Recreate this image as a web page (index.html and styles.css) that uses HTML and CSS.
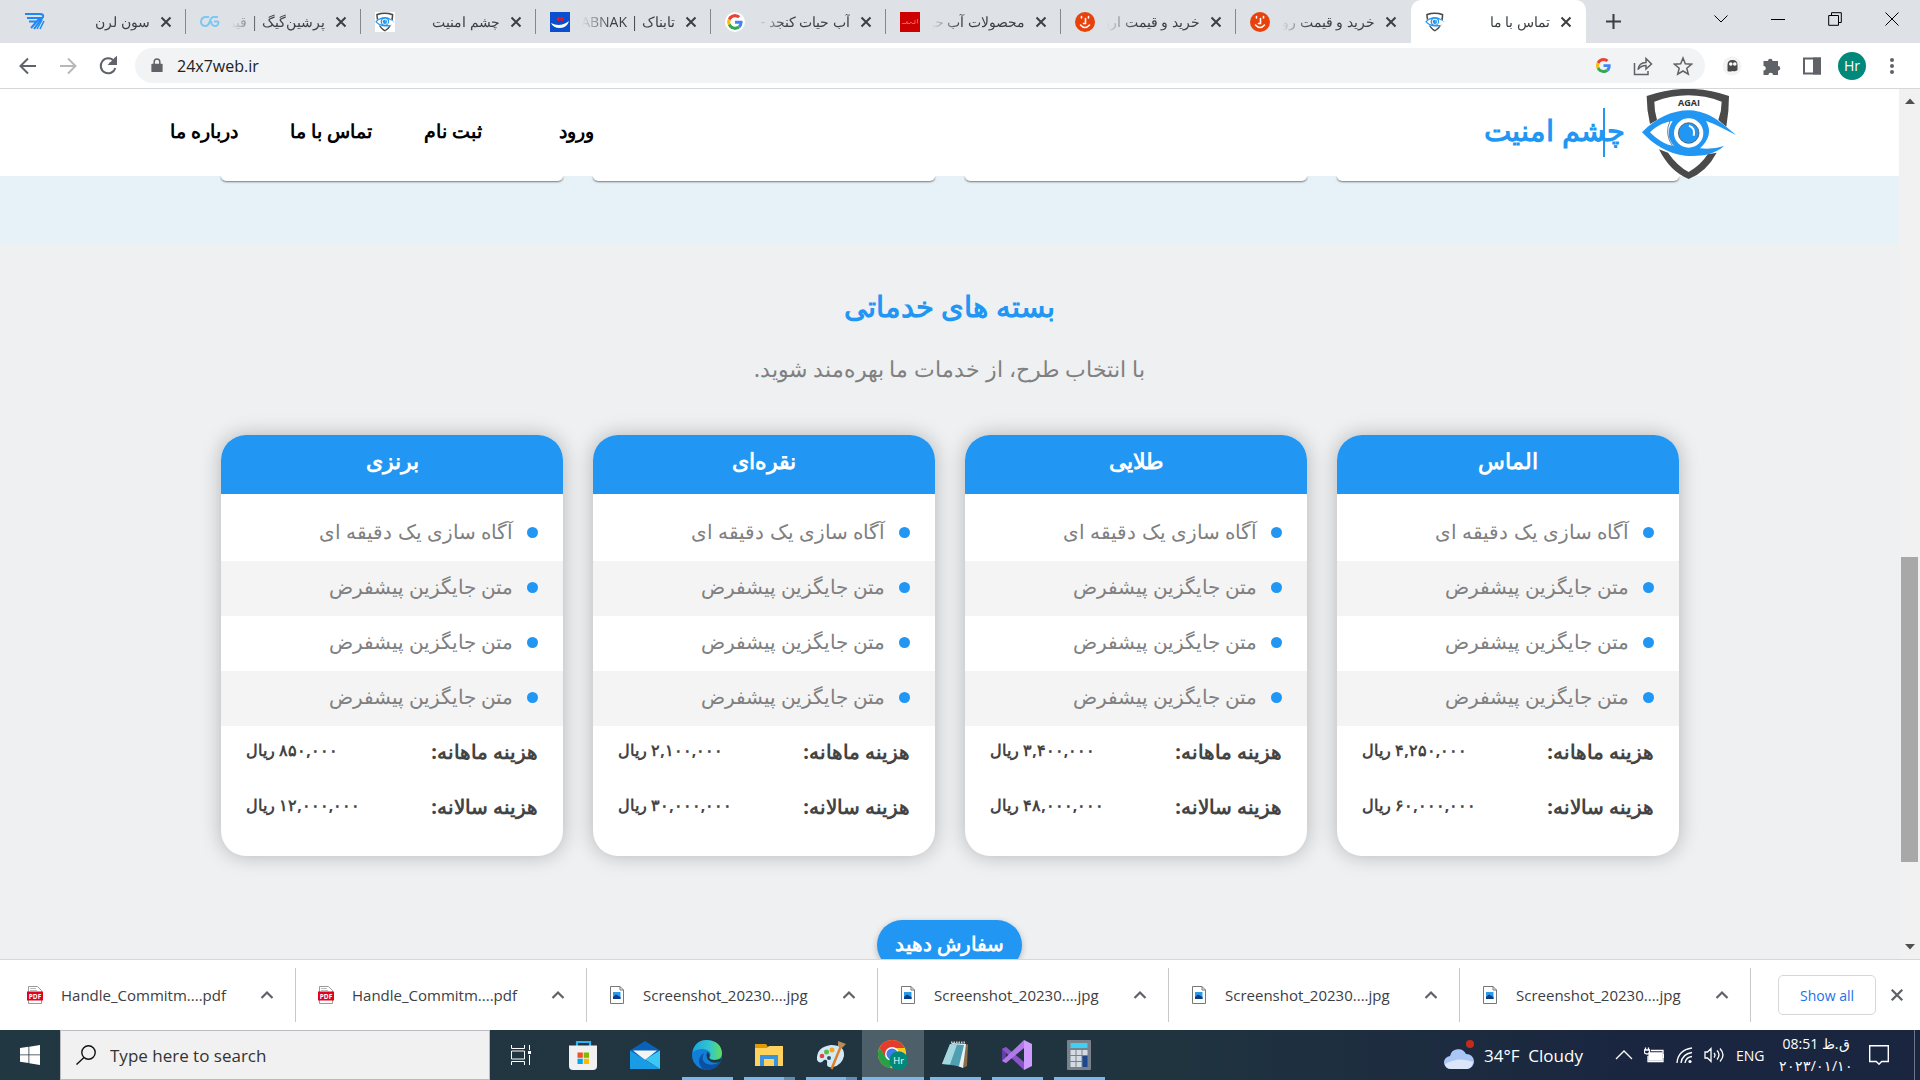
FILE: index.html
```html
<!DOCTYPE html>
<html lang="fa">
<head>
<meta charset="utf-8">
<title>تماس با ما</title>
<link rel="stylesheet" href="styles.css">
</head>
<body>
<svg class="defs" aria-hidden="true">
  <symbol id="x" viewBox="0 0 12 12"><path d="M1.500 1.500l9 9M10.500 1.500l-9 9" stroke="currentColor" stroke-width="2" fill="none"/></symbol>
  <symbol id="up" viewBox="0 0 14 10"><path d="M1.500 8L7 2.500 12.500 8" stroke="currentColor" stroke-width="2.200" fill="none"/></symbol>
  <symbol id="google" viewBox="0 0 48 48"><path fill="#ea4335" d="M24 9.500c3.540 0 6.710 1.220 9.210 3.600l6.850-6.850C35.900 2.380 30.470 0 24 0 14.620 0 6.510 5.380 2.560 13.220l7.980 6.190C12.430 13.720 17.740 9.500 24 9.500z"/><path fill="#4285f4" d="M46.980 24.550c0-1.570-.15-3.090-.38-4.550H24v9.020h12.940c-.58 2.960-2.260 5.480-4.780 7.180l7.730 6c4.510-4.180 7.090-10.360 7.090-17.650z"/><path fill="#fbbc05" d="M10.530 28.590A14.500 14.500 0 0 1 9.770 24c0-1.600.27-3.140.76-4.590l-7.980-6.190A23.900 23.900 0 0 0 0 24c0 3.880.92 7.540 2.560 10.780l7.970-6.190z"/><path fill="#34a853" d="M24 48c6.480 0 11.930-2.130 15.890-5.810l-7.730-6c-2.150 1.450-4.920 2.300-8.160 2.300-6.260 0-11.570-4.220-13.470-9.910l-7.980 6.190C6.510 42.620 14.620 48 24 48z"/></symbol>
  <symbol id="shield" viewBox="513 12 288 270">
    <path fill="#4a4a4a" d="M530 33Q655-10 777 33Q777 80 769 125L745 105Q755 78 755 50Q655 12 553 50Q553 78 561 105L540 117Q530 75 530 33zM567 193L594 203Q622 243 656 261Q692 241 713 208L740 203Q710 260 656 282Q600 260 567 193z"/>
    <path fill="#2196f3" d="M516 142C560 97 610 75 660 76C720 80 752 112 798 150C765 134 738 118 708 108Q733 150 690 190Q730 194 762 183C730 212 685 215 645 212C590 205 550 178 516 142z"/>
    <path fill="#fff" d="M540 142C560 122 580 112 608 108Q582 146 612 184C582 178 560 162 540 142z"/>
    <circle cx="656" cy="144" r="44" fill="#fff"/><circle cx="656" cy="144" r="31" fill="#2196f3" stroke="#444" stroke-width="2"/>
    <path d="M657 122q20 8 14 30" stroke="#fff" stroke-width="6" fill="none"/>
    <path d="M600 108q-18 38 8 76" stroke="#345" stroke-width="2" fill="none"/>
  </symbol>
  <symbol id="smile" viewBox="0 0 20 20"><circle cx="10" cy="10" r="10" fill="#e8420c"/><path d="M6.500 4.500v1.500M13.500 4.500v1.500M10.500 6.500v5H8.500M5.500 13q4.500 5 9 0" stroke="#fff" stroke-width="1.600" fill="none" stroke-linecap="round"/></symbol>
  <symbol id="pdf" viewBox="0 0 16 18"><path d="M1.500.5h9l4 4v13h-13z" fill="#fff" stroke="#999"/><path d="M3 2.500h6M3 4.500h7" stroke="#bbb"/><path fill="#e2001a" d="M0 5.500h16v9H0z"/><text x="8" y="12.500" font-size="6.500" font-weight="700" fill="#fff" text-anchor="middle" font-family="Open Sans">PDF</text></symbol>
  <symbol id="jpg" viewBox="0 0 14 18"><path d="M.5.5H10l3.500 3.500v13.500H.5z" fill="#fff" stroke="#777"/><path d="M10 .5V4h3.500" fill="none" stroke="#777"/><path fill="#2b9be8" d="M3 6h7.500v7H3z"/><path fill="#0b3f8c" d="M3 11l3-2.500 4.500 2.500v2H3z"/></symbol>
</svg>

<nav class="tabs">
  <div class="tab"><svg class="fav" viewBox="0 0 20 20"><path d="M0 2h15q4 0 3 3L9 17M2 6h13L6 16M4 9.500h8" stroke="#1e88f5" stroke-width="2" fill="none"/><path d="M12 17l5-9M15 17l4-8" stroke="#1e88f5" stroke-width="1.500"/></svg><a href="#" dir="rtl">سون لرن</a><button aria-label="Close"><svg><use href="#x"/></svg></button></div>
  <div class="tab"><svg class="fav" viewBox="0 0 20 20"><path d="M9 5H5q-4 1-4 5t5 4q3-1 4-5t4-4h4M18.500 9.500H14M18.500 9.500q0 5-4 4.500-4-1-3-5" stroke="#7cc8f2" stroke-width="2" fill="none"/></svg><a href="#" dir="rtl">پرشین‌گیگ | قیمت</a><button aria-label="Close"><svg><use href="#x"/></svg></button></div>
  <div class="tab"><svg class="fav white"><use href="#shield"/></svg><a href="#" dir="rtl">چشم امنیت</a><button aria-label="Close"><svg><use href="#x"/></svg></button></div>
  <div class="tab"><svg class="fav" viewBox="0 0 20 20"><path fill="#0a4fd0" d="M0 0h20v20H0z"/><path d="M1 11q9 5 18-2-2 7-9 7t-9-5z" fill="#fff"/><circle cx="8.500" cy="7" r="1.900" fill="#f01020"/><circle cx="12" cy="7" r="1.900" fill="#f01020"/></svg><a href="#" dir="rtl">تابناک | TABNAK</a><button aria-label="Close"><svg><use href="#x"/></svg></button></div>
  <div class="tab"><svg class="fav white round"><use href="#google"/></svg><a href="#" dir="rtl">آب حیات کنجد - Google</a><button aria-label="Close"><svg><use href="#x"/></svg></button></div>
  <div class="tab"><svg class="fav" viewBox="0 0 20 20"><path fill="#cc0000" d="M0 0h20v20H0z"/><path d="M2 11.500h4l1-2v2h3l1-1.500 1 1.500h3V8M17.500 7v4.500" stroke="#ef8a80" fill="none" stroke-width=".7"/></svg><a href="#" dir="rtl">محصولات آب حیات</a><button aria-label="Close"><svg><use href="#x"/></svg></button></div>
  <div class="tab"><svg class="fav"><use href="#smile"/></svg><a href="#" dir="rtl">خرید و قیمت ارزان</a><button aria-label="Close"><svg><use href="#x"/></svg></button></div>
  <div class="tab last"><svg class="fav"><use href="#smile"/></svg><a href="#" dir="rtl">خرید و قیمت روغن</a><button aria-label="Close"><svg><use href="#x"/></svg></button></div>
  <div class="tab active"><svg class="fav"><use href="#shield"/></svg><a href="#" dir="rtl">تماس با ما</a><button aria-label="Close"><svg><use href="#x"/></svg></button></div>
  <button class="plus" aria-label="New tab"><svg viewBox="0 0 16 16"><path d="M8 0v16M0 8h16" stroke="#3c4043" stroke-width="2.200"/></svg></button>
  <div class="wins">
    <button aria-label="Tab search"><svg viewBox="0 0 14 14"><path d="M.5 3.500L7 10l6.500-6.500"/></svg></button>
    <button aria-label="Minimize"><svg viewBox="0 0 14 14"><path d="M0 7.500h14"/></svg></button>
    <button aria-label="Restore"><svg viewBox="0 0 14 14"><path d="M.7 3.500h9.800v9.800H.7zM3.500 3.500V.7h9.800v9.800h-2.800"/></svg></button>
    <button aria-label="Close window"><svg viewBox="0 0 14 14"><path d="M.5.5l13 13M13.500.5l-13 13"/></svg></button>
  </div>
</nav>

<div class="toolbar">
  <button aria-label="Back"><svg class="ic" viewBox="0 0 20 20"><path d="M18 10H3M10 2.500L2.500 10l7.500 7.500"/></svg></button>
  <button aria-label="Forward" class="off"><svg class="ic" viewBox="0 0 20 20"><path d="M2 10h15M10 2.500l7.500 7.500-7.500 7.500"/></svg></button>
  <button aria-label="Reload"><svg class="ic" viewBox="0 0 20 20"><path d="M16 5a7.500 7.500 0 1 0 1.400 7M17.500 1.500v6h-6"/><path class="f" d="M18 2v6h-6z"/></svg></button>
  <div class="omni">
    <svg class="lock" viewBox="0 0 12 16"><path fill="#5f6368" d="M1 6h10q1 0 1 1v7q0 1-1 1H1q-1 0-1-1V7q0-1 1-1z"/><path d="M3 6.500V4a3 3 0 0 1 6 0v2.500" fill="none" stroke="#5f6368" stroke-width="1.600"/></svg>
    <input type="text" value="24x7web.ir" aria-label="Address">
    <button aria-label="Google"><svg class="g"><use href="#google"/></svg></button>
    <button aria-label="Share"><svg class="ic thin" viewBox="0 0 20 20"><path d="M1.500 7v11.500H15V15M5 13.500q1-7 8-7V2.500L18.500 8 13 13v-3.500q-5 0-8 4z"/></svg></button>
    <button aria-label="Bookmark"><svg class="ic thin" viewBox="0 0 20 20"><path d="M10 2l2.300 5.700 6.200.5-4.700 4 1.500 6L10 15l-5.300 3.200 1.500-6-4.700-4 6.200-.5z"/></svg></button>
  </div>
  <button aria-label="Ghostery"><svg class="ic" viewBox="0 0 20 20"><circle cx="10" cy="10" r="9.500" fill="#f1f3f4" stroke="none"/><path fill="#4a4a4a" stroke="none" d="M5.500 9q0-5 5-5t5 5v5q-2 2-5 1-3 1-5 0z"/><circle cx="8.800" cy="8" r="1.800" fill="#fff" stroke="none"/><circle cx="12.800" cy="8" r="1.800" fill="#fff" stroke="none"/></svg></button>
  <button aria-label="Extensions"><svg class="ic" viewBox="0 0 20 20"><path class="f" d="M1.500 5H6a2.300 2.300 0 1 1 4.600 0H16v5a2.300 2.300 0 1 1 0 4.600V19h-5a2.300 2.300 0 0 0-4.600 0H1.500v-4.500a2.300 2.300 0 0 0 0-4.600z" stroke="none"/></svg></button>
  <button aria-label="Side panel"><svg class="ic" viewBox="0 0 20 20"><path d="M2 2.500h16v15H2z"/><path class="f" d="M12 2.500h6v15h-6z"/></svg></button>
  <button aria-label="Profile" class="avatar">Hr</button>
  <button aria-label="Menu"><svg class="ic" viewBox="0 0 20 20"><g class="f" stroke="none"><circle cx="10" cy="4" r="2"/><circle cx="10" cy="10" r="2"/><circle cx="10" cy="16" r="2"/></g></svg></button>
</div>

<div class="view">
  <main class="page" dir="rtl">
    <header class="site">
      <a href="#" class="brand"><span class="mark"><svg><use href="#shield"/></svg><span class="agai">AGAI</span></span><strong>چشم امنیت</strong></a>
      <nav class="menu"><a href="#" class="login">ورود</a><a href="#">ثبت نام</a><a href="#">تماس با ما</a><a href="#">درباره ما</a></nav>
    </header>
    <section class="features"><div class="grid"><i></i><i></i><i></i><i></i></div></section>
    <section class="packs">
      <h2>بسته های خدماتی</h2>
      <p>با انتخاب طرح، از خدمات ما بهره‌مند شوید.</p>
      <div class="grid">
        <article class="card"><h3>الماس</h3><ul><li>آگاه سازی یک دقیقه ای</li><li>متن جایگزین پیشفرض</li><li>متن جایگزین پیشفرض</li><li>متن جایگزین پیشفرض</li></ul><dl><div><dt>هزینه ماهانه:</dt><dd>۴,۲۵۰,۰۰۰ ریال</dd></div><div><dt>هزینه سالانه:</dt><dd>۶۰,۰۰۰,۰۰۰ ریال</dd></div></dl></article>
        <article class="card"><h3>طلایی</h3><ul><li>آگاه سازی یک دقیقه ای</li><li>متن جایگزین پیشفرض</li><li>متن جایگزین پیشفرض</li><li>متن جایگزین پیشفرض</li></ul><dl><div><dt>هزینه ماهانه:</dt><dd>۳,۴۰۰,۰۰۰ ریال</dd></div><div><dt>هزینه سالانه:</dt><dd>۴۸,۰۰۰,۰۰۰ ریال</dd></div></dl></article>
        <article class="card"><h3>نقره‌ای</h3><ul><li>آگاه سازی یک دقیقه ای</li><li>متن جایگزین پیشفرض</li><li>متن جایگزین پیشفرض</li><li>متن جایگزین پیشفرض</li></ul><dl><div><dt>هزینه ماهانه:</dt><dd>۲,۱۰۰,۰۰۰ ریال</dd></div><div><dt>هزینه سالانه:</dt><dd>۳۰,۰۰۰,۰۰۰ ریال</dd></div></dl></article>
        <article class="card"><h3>برنزی</h3><ul><li>آگاه سازی یک دقیقه ای</li><li>متن جایگزین پیشفرض</li><li>متن جایگزین پیشفرض</li><li>متن جایگزین پیشفرض</li></ul><dl><div><dt>هزینه ماهانه:</dt><dd>۸۵۰,۰۰۰ ریال</dd></div><div><dt>هزینه سالانه:</dt><dd>۱۲,۰۰۰,۰۰۰ ریال</dd></div></dl></article>
      </div>
      <button class="order">سفارش دهید</button>
    </section>
  </main>
  <div class="scroll"><svg viewBox="0 0 10 6"><path d="M0 6l5-5.500L10 6z"/></svg><div class="track"><div class="thumb"></div></div><svg viewBox="0 0 10 6"><path d="M0 0l5 5.500L10 0z"/></svg></div>
</div>

<div class="downloads">
  <div class="dl"><svg class="file"><use href="#pdf"/></svg><a href="#">Handle_Commitm....pdf</a><button aria-label="Options"><svg><use href="#up"/></svg></button></div>
  <div class="dl"><svg class="file"><use href="#pdf"/></svg><a href="#">Handle_Commitm....pdf</a><button aria-label="Options"><svg><use href="#up"/></svg></button></div>
  <div class="dl"><svg class="file"><use href="#jpg"/></svg><a href="#">Screenshot_20230....jpg</a><button aria-label="Options"><svg><use href="#up"/></svg></button></div>
  <div class="dl"><svg class="file"><use href="#jpg"/></svg><a href="#">Screenshot_20230....jpg</a><button aria-label="Options"><svg><use href="#up"/></svg></button></div>
  <div class="dl"><svg class="file"><use href="#jpg"/></svg><a href="#">Screenshot_20230....jpg</a><button aria-label="Options"><svg><use href="#up"/></svg></button></div>
  <div class="dl"><svg class="file"><use href="#jpg"/></svg><a href="#">Screenshot_20230....jpg</a><button aria-label="Options"><svg><use href="#up"/></svg></button></div>
  <button class="all">Show all</button>
  <button class="shut" aria-label="Close"><svg><use href="#x"/></svg></button>
</div>

<footer class="taskbar">
  <button class="start" aria-label="Start"><svg viewBox="0 0 20 20"><path fill="#fff" d="M0 3l8.500-1.200v7.700H0zM9.300 1.700L20 0v9.500H9.300zM0 10.300h8.500V18L0 16.800zM9.300 10.300H20V20L9.300 18.200z"/></svg></button>
  <label class="search"><svg viewBox="0 0 20 20"><circle cx="12.500" cy="7.500" r="6.700"/><path d="M8 12.500L.5 19.500"/></svg><input type="text" placeholder="Type here to search"></label>
  <div class="apps">
  <button class="app" aria-label="Task view"><svg class="tv" viewBox="0 0 20 20"><path d="M.5 0v3.500h13V0M.5 6h13v8H.5zM.5 20v-3.500h13V20M18.500 0v5M18.500 10v10" fill="none" stroke="#fff"/><path fill="#fff" d="M17 6h3v3h-3z"/></svg></button>
  <button class="app" aria-label="Store"><svg viewBox="0 0 30 30"><path d="M9 7V2h13v5" fill="none" stroke="#2fb4f0" stroke-width="2.200"/><path fill="#f1f1f1" d="M1 5.500h28V26q0 4-4 4H5q-4 0-4-4z"/><path fill="#f25022" d="M9.500 12.500h5.300v5.300H9.500z"/><path fill="#7fba00" d="M15.700 12.500H21v5.300h-5.300z"/><path fill="#00a4ef" d="M9.500 18.700h5.300V24H9.500z"/><path fill="#ffb900" d="M15.700 18.700H21V24h-5.300z"/></svg></button>
  <button class="app" aria-label="Mail"><svg viewBox="0 0 30 30"><path fill="#0a62b8" d="M0 10.500L15 1l15 9.500V20H0z"/><path fill="#f4f4f4" d="M3 10.500h24L15 20z"/><path fill="#1a9be6" d="M0 10.500L30 29H0z"/><path fill="#3bc8f5" d="M30 10.500V29L15 19.500z"/></svg></button>
  <button class="app open" aria-label="Edge"><svg viewBox="0 0 30 30"><defs><linearGradient id="e1"><stop stop-color="#1ba4e4"/><stop offset=".6" stop-color="#35c6c8"/><stop offset="1" stop-color="#62e05a"/></linearGradient></defs><circle cx="15" cy="15" r="15" fill="#0f7fd8"/><path fill="url(#e1)" d="M.5 12Q3 0 15 0q14 1 15 13 0 7-8 7-6 0-4-3 2-5-3-7Q8 7 .5 12z"/><path fill="#0d4fa0" d="M12 13q-4 8 3 11 7 2 13-2-4 8-13 8-7-1-8-8 0-6 5-9z"/><path fill="#213640" d="M15 12q4 2 2 5.500Q18 20 23 20q4 0 7-2l-2 4q-5 1.500-9 0-6-3-4-10z"/></svg></button>
  <button class="app open multi" aria-label="File Explorer"><svg viewBox="0 0 30 30"><path fill="#e09a00" d="M1 4h11l2 3v4H1z"/><path fill="#ffd25e" d="M1 8h12l2-2h14v20H1z"/><path d="M8 26v-9h14v9" stroke="#3a94dd" stroke-width="4" fill="none"/></svg></button>
  <button class="app open multi" aria-label="Paint"><svg viewBox="0 0 30 30"><path fill="#d3e9f7" d="M1 20Q0 7 15 5q14 0 13 11-2 9-11 11-6 1-6-3 1-5-3-4-4 5-7 0z"/><circle cx="6" cy="16" r="2.300" fill="#e0443e"/><circle cx="10.500" cy="12" r="2.500" fill="#5fbb46"/><circle cx="16" cy="10" r="2.500" fill="#f5a81c"/><circle cx="13" cy="18" r="2" fill="#31505f"/><path d="M15.500 29L25 6" stroke="#d9822b" stroke-width="2.500"/><path fill="#b98a5a" d="M22 1l8 3-4 4-4-2z"/></svg></button>
  <button class="app open current" aria-label="Chrome"><svg viewBox="0 0 32 32"><circle cx="15" cy="15" r="15" fill="#fdc726"/><path fill="#e33b2e" d="M1.500 8.500A15 15 0 0 1 28.500 8.500H15L8 18z"/><path fill="#27a046" d="M1.500 8.500L9 19l6 3-2 8A15 15 0 0 1 1.500 8.500z"/><circle cx="15" cy="15" r="7.500" fill="#fff"/><circle cx="15" cy="15" r="6" fill="#3f7ee8"/><circle cx="22" cy="22" r="10" fill="#00897b"/><text x="22" y="26" font-size="10" fill="#fff" text-anchor="middle" font-family="Open Sans">Hr</text></svg></button>
  <button class="app open" aria-label="Notepad"><svg viewBox="0 0 30 30"><path fill="#8a6f46" d="M25 5l3-1-1 22-4 2z"/><path fill="#e8f2f4" d="M12 3l14 1-3 24-8-3z"/><path fill="#4f9fb2" d="M10 4l14 1-5 21-17-2z"/><path fill="#a6d6de" d="M10 4l7 .5-7 20-8-.5z"/><path d="M11 2.500h14" stroke="#ccc" stroke-width="2" stroke-dasharray="1.500 1"/></svg></button>
  <button class="app open" aria-label="Visual Studio"><svg viewBox="0 0 30 30"><path fill="#6a3aa8" d="M0 9l4-2 6 6.500V17l-6 6-4-2z"/><path fill="#213640" d="M4 11v8l4-4z"/><path fill="#8a55c9" d="M4 7L22 22v8L0 9z"/><path fill="#b07be8" d="M0 21L22 0v8L4 23z"/><path fill="#cf9bff" d="M22 0l8 4v22l-8 4z"/></svg></button>
  <button class="app open" aria-label="Calculator"><svg viewBox="0 0 30 30"><path fill="#79828c" d="M4 0h22q1 0 1 1v28q0 1-1 1H4q-1 0-1-1V1q0-1 1-1z"/><path fill="#3fd0f5" d="M6.500 3h17v5h-17z"/><path fill="#d5dbe2" d="M6.500 10h5v5h-5zM12.500 10h5v5h-5zM18.500 10h5v5h-5zM6.500 16h5v5h-5zM12.500 16h5v5h-5zM6.500 22h5v5h-5zM12.500 22h5v5h-5z"/><path fill="#1b4890" d="M18.500 16h5v11h-5z"/></svg></button>
  </div>
  <div class="tray">
    <svg class="cloud" viewBox="0 0 30 30"><path fill="#a9c6f7" d="M7 29a6.500 6.500 0 0 1-1-13A8.500 8.500 0 0 1 22 14a7.500 7.500 0 0 1 1 15z"/><path fill="#dbe6fb" d="M7 29q-6-1-6-5 14-8 28-2-1 6-6 7z"/><circle cx="26" cy="4" r="4" fill="#c42b1c"/></svg>
    <span class="weather">34°F&nbsp; Cloudy</span>
    <svg class="ti" viewBox="0 0 20 20"><path d="M2 14l8-8 8 8"/></svg>
    <svg class="ti" viewBox="0 0 20 20"><path fill="#fff" d="M5 8h13v7H5z"/><path d="M7 5.500h12v11H4V11M.5 5h5v3q-2.500 2-5 0zM1.500 5V2.500M4.500 5V2.500M19.500 9v4"/></svg>
    <svg class="ti" viewBox="0 0 20 20"><path d="M3 18Q4 5 18 3M7 18Q8 9 18 7.500M11 18q1-6 7-6.500"/><circle cx="16" cy="16.500" r="1.600" fill="#fff" stroke="none"/></svg>
    <svg class="ti" viewBox="0 0 20 20"><path d="M1 7h2.500L7 3.500v13L3.500 13H1zM10 8q2 2 0 4.500M13 5.500q4 4 0 9M16 3.500q6 6.500 0 13"/></svg>
    <span class="lang">ENG</span>
    <time class="clock"><span dir="ltr">08:51 ق.ظ</span><span dir="ltr">۲۰۲۳/۰۱/۱۰</span></time>
    <svg class="note" viewBox="0 0 20 20"><path d="M.7.7h18.600v15.800h-6.600L10 19.200 7.300 16.500H.7z"/></svg>
    <i class="peek"></i>
  </div>
</footer>
</body>
</html>
```
FILE: styles.css
```css
* { box-sizing: border-box; }
body { margin: 0; height: 100vh; display: flex; flex-direction: column; overflow: hidden; font-family: "Open Sans", "Noto Sans", sans-serif; background: #fff; }
.defs { display: none; }
button { border: 0; padding: 0; background: none; color: inherit; font: inherit; display: flex; align-items: center; justify-content: center; }
a { color: inherit; text-decoration: none; }
input { border: 0; padding: 0; background: none; font: inherit; color: inherit; outline: 0; min-width: 0; flex: 1; }
h2, h3, p, ul, dl, dd { margin: 0; padding: 0; }
svg { display: block; flex: none; }

/* tab strip */
.tabs { flex: none; height: 43px; display: flex; background: #dee1e6; padding-left: 11px; font-size: 14px; color: #3c4043; }
.tab { flex: 0 1 175px; min-width: 0; display: flex; align-items: center; padding: 0 14px; position: relative; }
.tab::after { content: ""; position: absolute; right: 0; top: 9px; width: 1px; height: 25px; background: #84888c; }
.tab.last::after, .tab.active::after { display: none; }
.tab.active { background: #fff; border-radius: 10px 10px 0 0; }
.fav { width: 20px; height: 20px; }
.white { background: #fff; }
.round { border-radius: 50%; padding: 2px; }
.tab a { flex: 1; min-width: 0; overflow: hidden; white-space: nowrap; margin: 0 10px 0 12px; line-height: 26px; -webkit-mask-image: linear-gradient(90deg, transparent, #000 28px); mask-image: linear-gradient(90deg, transparent, #000 28px); }
.tab button svg { width: 12px; height: 12px; }
.plus { width: 54px; }
.plus svg { width: 15px; height: 15px; }
.wins { margin-left: auto; display: flex; height: 38px; }
.wins button { width: 57px; }
.wins svg { width: 14px; height: 14px; fill: none; stroke: #000; }

/* toolbar */
.toolbar { flex: none; height: 46px; display: flex; align-items: center; padding: 0 8px; border-bottom: 1px solid #d5d7da; color: #5f6368; }
.toolbar button { width: 40px; height: 35px; }
.toolbar .off { opacity: .45; }
.ic { width: 20px; height: 20px; fill: none; stroke: #5f6368; stroke-width: 2; }
.thin { stroke-width: 1.5; }
.f { fill: #5f6368; }
.omni { flex: 1; display: flex; align-items: center; height: 35px; margin: 0 7px; padding: 0 2px 0 16px; border-radius: 18px; background: #f1f3f4; }
.omni input { color: #202124; font-size: 16px; margin-left: 14px; }
.lock { width: 12px; height: 15px; }
.g { width: 15px; height: 15px; }
.toolbar .avatar { width: 28px; height: 28px; margin: 0 6px; border-radius: 50%; background: #00897b; color: #fff; font-size: 14px; }

/* web page */
.view { flex: 1; min-height: 0; display: flex; }
.page { flex: 1; min-width: 0; overflow: hidden; background: #eff0f2; font-family: "Noto Sans", sans-serif; color: #444; }
.site { height: 87px; display: flex; align-items: center; justify-content: space-between; padding: 0 162px 0 170px; background: #fff; position: relative; z-index: 1; }
.brand { display: flex; align-items: flex-start; gap: 16px; color: #2196f3; align-self: flex-start; }
.mark { position: relative; }
.mark svg { width: 96px; height: 90px; }
.agai { position: absolute; top: 8px; left: 0; width: 96px; text-align: center; font: 700 9px/12px "Open Sans", sans-serif; color: #333; }
.brand strong { position: relative; font-size: 29px; line-height: 82px; }
.brand strong::after { content: ""; position: absolute; right: 20px; top: 19px; width: 2px; height: 49px; background: #2196f3; }
.menu { display: flex; gap: 52px; padding-bottom: 4px; font-size: 19px; font-weight: 700; color: #000; }
.login { margin-left: 25px; }
.grid { display: grid; grid-template-columns: repeat(4, 1fr); gap: 30px; margin: 0 220px 0 221px; }
.features { background: #e6f2f8; padding-bottom: 62px; }
.features i { height: 5px; background: #fff; border-radius: 0 0 6px 6px; box-shadow: 0 1px 2px #777; clip-path: inset(0 -2px -4px); }
.packs { padding-top: 40px; text-align: center; }
.packs h2 { font-size: 29px; line-height: 46px; color: #2196f3; }
.packs p { margin: 22px 0 50px; font-size: 22px; line-height: 34px; color: #808080; }
.card { background: #fff; border-radius: 25px; overflow: hidden; box-shadow: 0 0 20px rgba(0, 0, 0, .25); padding-bottom: 20px; }
.card h3 { background: #2196f3; color: #fff; font-size: 22px; line-height: 51px; padding-bottom: 8px; margin-bottom: 12px; }
.card ul { list-style: none; color: #808080; font-size: 20px; }
.card li { display: flex; align-items: center; gap: 14px; height: 55px; padding: 0 25px 4px; }
.card li::before { content: ""; width: 11px; height: 11px; margin-top: 2px; border-radius: 50%; background: #2196f3; }
.card li:nth-child(even) { background: #f4f4f4; }
.card dl div { display: flex; justify-content: space-between; height: 55px; padding: 0 25px; line-height: 52px; font-weight: 700; color: #444; }
.card dt { font-size: 20px; }
.card dd { font-size: 16px; line-height: 48px; }
.order { width: 145px; height: 50px; padding-bottom: 4px; margin: 64px auto 0; border-radius: 25px; background: #2196f3; color: #fff; font-size: 20px; font-weight: 700; box-shadow: 0 2px 6px rgba(0, 0, 0, .25); }
.scroll { width: 21px; display: flex; flex-direction: column; align-items: center; padding: 9px 0; background: #f1f1f1; }
.scroll svg { width: 10px; height: 6px; fill: #505050; }
.track { flex: 1; width: 17px; display: flex; flex-direction: column; }
.track::before { content: ""; flex: 452; }
.track::after { content: ""; flex: 82; }
.thumb { flex: 305; background: #a8a8a8; }

/* downloads */
.downloads { flex: none; height: 71px; display: flex; align-items: center; border-top: 1px solid #d5d7da; padding: 0 11px 0 5px; font-size: 15px; color: #3c4043; }
.dl { flex: 0 1 291px; min-width: 0; height: 54px; display: flex; align-items: center; padding: 0 21px 0 22px; border-right: 1px solid #c8c8c8; }
.file { width: 16px; height: 18px; margin-right: 18px; }
.dl a { flex: 1; min-width: 0; white-space: nowrap; }
.dl button svg { width: 14px; height: 10px; color: #5f6368; }
.all { width: 98px; height: 40px; margin: 0 0 0 auto; border: 1px solid #d5d7da; border-radius: 5px; color: #1a73e8; font-size: 14px; }
.shut { width: 24px; margin-left: 9px; color: #5f6368; }
.shut svg { width: 14px; height: 14px; }

/* taskbar */
.taskbar { flex: none; height: 50px; display: flex; background: linear-gradient(90deg, #213741, #20343f 60%, #1a2640 85%); color: #fff; }
.start { width: 60px; }
.start svg { width: 20px; height: 20px; }
.search { flex: 0 1 430px; display: flex; align-items: center; gap: 14px; padding-left: 15px; background: #f1f1f1; border: 1px solid #b8bcc0; color: #333; }
.search svg { width: 20px; height: 20px; fill: none; stroke: #111; stroke-width: 1.4; }
.search input { font-size: 17px; }
.search input::placeholder { color: #333; opacity: 1; }
.apps { display: flex; }
.app { width: 62px; position: relative; }
.app svg { width: 30px; height: 30px; }
.app .tv { width: 20px; height: 20px; }
.open::after { content: ""; position: absolute; left: 6px; right: 5px; bottom: 0; height: 3px; background: #76b9ed; }
.multi::after { background: linear-gradient(90deg, #76b9ed 40px, #5b8fb8 40px); }
.current { background: #4d5f68; }
.current::after { left: 0; right: 0; }
.tray { margin-left: auto; display: flex; align-items: center; font-size: 17px; }
.cloud { width: 30px; height: 30px; margin-right: 10px; }
.weather { width: 130px; white-space: nowrap; }
.ti { width: 20px; height: 20px; margin-right: 10px; fill: none; stroke: #fff; stroke-width: 1.3; }
.lang { font-size: 14px; width: 42px; margin-left: 2px; }
.clock { width: 76px; display: grid; font-size: 14px; line-height: 22px; text-align: center; white-space: nowrap; }
.note { width: 20px; height: 20px; margin: 0 25px 0 15px; fill: none; stroke: #fff; stroke-width: 1.4; }
.peek { width: 6px; height: 50px; border-left: 1px solid #6d7688; }
```
